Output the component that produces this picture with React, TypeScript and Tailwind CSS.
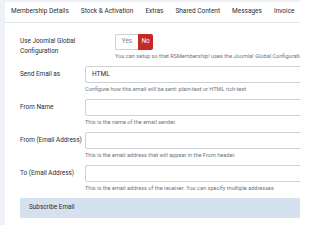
import React from "react";

const tabs = [
  "Membership Details",
  "Stock & Activation",
  "Extras",
  "Shared Content",
  "Messages",
  "Invoice",
];

function Helper({ children }: { children: React.ReactNode }) {
  return (
    <p className="mt-[2px] h-[8px] text-[5.6px] leading-[8px] text-[#6d757e] whitespace-nowrap">
      {children}
    </p>
  );
}

function TextField({ label, help }: { label: string; help: string }) {
  return (
    <div className="flex mb-[6px]">
      <div className="w-[95px] h-[17px] flex items-center text-[6.4px] text-[#2a2e33]">
        {label}
      </div>
      <div className="flex-1">
        <div className="h-[17px] w-[260px] border border-[#cdd1d6] rounded-[2px] bg-white" />
        <Helper>{help}</Helper>
      </div>
    </div>
  );
}

export default function App() {
  return (
    <div
      className="w-[300px] h-[225px] overflow-hidden bg-[#eef2f7] pl-[5px] pt-[2px]"
      style={{ fontFamily: "Roboto, 'Liberation Sans', sans-serif" }}
    >
      <div className="w-[340px] h-[240px] bg-white">
        {/* Tabs */}
        <div className="flex h-[21px] items-center border-b border-[#e3e7ec]">
          {tabs.map((t) => (
            <div
              key={t}
              className="px-[6px] text-[6.5px] text-[#2a2e33] whitespace-nowrap"
            >
              {t}
            </div>
          ))}
        </div>

        <div className="pl-[15px] pt-[11px]">
          {/* Use global config */}
          <div className="flex mb-[6px]">
            <div className="w-[95px] pt-[2px] text-[6.4px] leading-[10px] text-[#2a2e33]">
              Use Joomla! Global
              <br />
              Configuration
            </div>
            <div className="flex-1">
              <div className="flex h-[16px] w-fit text-[6.4px]">
                <div className="w-[23px] flex items-center justify-center border border-[#cdd1d6] border-r-0 rounded-l-[2px] text-[#7a828a]">
                  Yes
                </div>
                <div className="w-[15px] flex items-center justify-center bg-[#c52827] text-white rounded-r-[2px]">
                  No
                </div>
              </div>
              <Helper>
                You can setup so that RSMembership! uses the Joomla! Global Configuration
              </Helper>
            </div>
          </div>

          {/* Send email as */}
          <div className="flex mb-[6px]">
            <div className="w-[95px] h-[17px] flex items-center text-[6.4px] text-[#2a2e33]">
              Send Email as
            </div>
            <div className="flex-1">
              <div className="h-[17px] w-[260px] border border-[#cdd1d6] rounded-[2px] bg-white flex items-center pl-[6px] text-[6.6px] text-[#2a2e33]">
                HTML
              </div>
              <Helper>
                Configure how this email will be sent: plain-text or HTML rich-text
              </Helper>
            </div>
          </div>

          <TextField label="From Name" help="This is the name of the email sender." />
          <TextField
            label="From (Email Address)"
            help="This is the email address that will appear in the From header."
          />
          <TextField
            label="To (Email Address)"
            help="This is the email address of the receiver. You can specify multiple addresses"
          />

          <div className="h-[20px] bg-[#d5e1ef] flex items-center pl-[9px] text-[6.4px] text-[#2a2e33]">
            Subscribe Email
          </div>
        </div>
      </div>
    </div>
  );
}
